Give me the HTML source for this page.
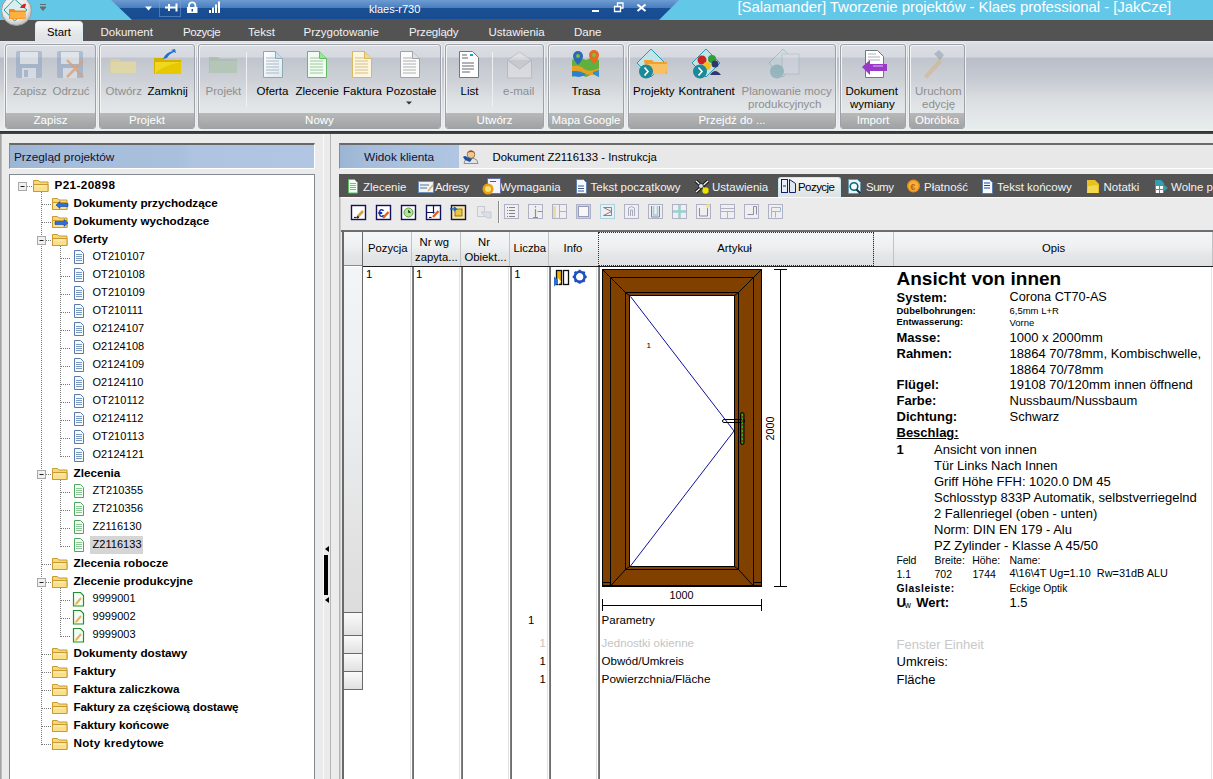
<!DOCTYPE html>
<html><head><meta charset="utf-8">
<style>
*{margin:0;padding:0;box-sizing:border-box}
html,body{width:1213px;height:779px;overflow:hidden;background:#ebebeb;font-family:"Liberation Sans",sans-serif;font-size:12px;color:#000}
.a{position:absolute}
.t{position:absolute;white-space:nowrap;line-height:1}
.tab{position:absolute;top:26.6px;color:#f2f2f2;font-size:11.5px;white-space:nowrap;line-height:1}
.grp{position:absolute;top:44px;height:85px;border:1px solid #9ea2a8;border-radius:3px;box-shadow:inset 1px 1px 0 #f2f4f6,0 0 0 1px #eef1f2;background:linear-gradient(#dadde2 0,#d6dae0 12px,#c0c4cc 13px,#cdd1d7 35px,#dde1e4 55px,#e3e8e9 68px);overflow:hidden}
.gl{position:absolute;left:0;right:0;bottom:0;height:15px;background:linear-gradient(#b9b9b9,#9fa3a5);color:#fff;font-size:11.5px;text-align:center;line-height:15px;white-space:nowrap}
.rb{position:absolute;top:86px;font-size:11.5px;white-space:nowrap;line-height:1;color:#000}
.rb.d{color:#8e8e8e}
.rsep{position:absolute;top:52px;width:1px;height:55px;background:#b0b4ba;border-right:1px solid #eef0f2}
</style></head><body>
<!-- TITLE BAR -->
<div class="a" style="left:0;top:0;width:1213px;height:20px;background:#63c7e8"></div>
<svg class="a" style="left:0;top:0" width="1213" height="20">
<defs><linearGradient id="tb" x1="0" y1="0" x2="0" y2="1">
<stop offset="0" stop-color="#6d9cd2"/><stop offset="0.38" stop-color="#4a7ebf"/><stop offset="0.40" stop-color="#1a4f96"/><stop offset="0.95" stop-color="#174c93"/><stop offset="1" stop-color="#3a6aa8"/></linearGradient></defs>
<polygon points="111,0 679,0 659,20 132,20" fill="url(#tb)"/>
<!-- quick access icons -->
<path d="M145,6.5 L152,6.5 L148.5,10.5 Z" fill="#fff"/>
<rect x="159.5" y="0.5" width="21" height="16" fill="none" stroke="#7aa6dc" stroke-dasharray="1,1"/>
<path d="M165,7.5 h11 M169,4 v7 M176.5,3.5 v8" stroke="#fff" stroke-width="2"/>
<path d="M189,7.5 v-2 a3.2,3.2 0 0 1 6.4,0 v2" stroke="#fff" stroke-width="1.8" fill="none"/>
<rect x="187" y="7" width="10.5" height="6" fill="#fff"/>
<rect x="191.5" y="9" width="1.5" height="2.5" fill="#1a4f96"/>
<path d="M209,10 h2 v3 h-2z M212,7.5 h2 v5.5 h-2z M215,4.5 h2 v8.5 h-2z M218,1.5 h2 v11.5 h-2z" fill="#fff"/>
<!-- window controls -->
<rect x="592" y="10" width="7" height="2" fill="#fff"/>
<path d="M614.5,6.5 h6 v5 h-6z M617.5,6.5 v-3.5 h5.5 v5 h-2.5" stroke="#fff" stroke-width="1.3" fill="none"/>
<path d="M637.5,4.5 L645.5,11 M645.5,4.5 L637.5,11" stroke="#fff" stroke-width="2"/>
<!-- quick access dropdown -->
<path d="M40,4.5 h6 M40,7 h6 L43,10.5 Z" stroke="#6b6b6b" stroke-width="1" fill="#6b6b6b"/>
</svg>
<div class="t" style="left:369px;top:3.5px;color:#fff;font-size:11px">klaes-r730</div>
<div class="t" style="left:737.5px;top:-0.8px;color:#fff;font-size:15px;letter-spacing:-0.06px">[Salamander] Tworzenie projektów - Klaes professional - [JakCze]</div>
<!-- TAB ROW -->
<div class="a" style="left:0;top:20px;width:1213px;height:21px;background:#535353"></div>
<div class="a" style="left:35px;top:21px;width:48px;height:21px;border:1px solid #d8ecf4;border-bottom:none;border-radius:4px 4px 0 0;background:linear-gradient(#f8f8f8,#e4e6e8 60%,#dfe2e6)"></div>
<div class="tab" style="left:47px;color:#000;font-size:11.3px">Start</div>
<div class="tab" style="left:100.5px">Dokument</div>
<div class="tab" style="left:183px;letter-spacing:-0.45px">Pozycje</div>
<div class="tab" style="left:248px">Tekst</div>
<div class="tab" style="left:303.5px">Przygotowanie</div>
<div class="tab" style="left:409px;letter-spacing:-0.2px">Przeglądy</div>
<div class="tab" style="left:488.5px">Ustawienia</div>
<div class="tab" style="left:574px">Dane</div>
<!-- app orb -->
<svg class="a" style="left:0;top:0" width="34" height="27">
<defs><radialGradient id="orb" cx="0.45" cy="0.4" r="0.6"><stop offset="0" stop-color="#ffffff"/><stop offset="0.7" stop-color="#e8e8e8"/><stop offset="1" stop-color="#bdbdbd"/></radialGradient></defs>
<circle cx="16.5" cy="10.5" r="15" fill="url(#orb)" stroke="#9a9a9a" stroke-width="1"/>
<path d="M14.5,-1 L27,10 L14.5,21 L4,10 Z" fill="#d8eef0" stroke="#2a9a9a" stroke-width="1"/>
<path d="M9,9 h5 l1.5,1.5 h10 v8.5 h-16.5z" fill="#f08a20"/>
<path d="M10,12 h15.5 v6.5 h-15.5z" fill="#fbb040"/>
<path d="M20,8 q3,-5 6,-4 l-1,4 z" fill="#d82020"/>
</svg>
<!-- RIBBON -->
<div class="a" style="left:0;top:41px;width:1213px;height:89px;background:linear-gradient(#e8eaec 0,#dadde2 2px,#d3d7dd 16px,#b9bdc8 17px,#c6cad2 38px,#dcdfe2 60px,#e4e9ea 80px,#e8ecec 88px)"></div>
<div class="a" style="left:0;top:129px;width:1213px;height:2px;background:#eef0f0"></div>
<div class="a" style="left:0;top:131px;width:1213px;height:3px;background:linear-gradient(#2e2e2e,#4a4a4a)"></div>
<div class="grp" style="left:5px;width:91px"><div class="gl">Zapisz</div></div>
<div class="grp" style="left:99px;width:96px"><div class="gl">Projekt</div></div>
<div class="grp" style="left:198px;width:243px"><div class="gl">Nowy</div></div>
<div class="grp" style="left:445px;width:99px"><div class="gl">Utwórz</div></div>
<div class="grp" style="left:548px;width:76px"><div class="gl">Mapa Google</div></div>
<div class="grp" style="left:628px;width:208px"><div class="gl">Przejdź do ...</div></div>
<div class="grp" style="left:840px;width:66px"><div class="gl">Import</div></div>
<div class="grp" style="left:909px;width:56px"><div class="gl">Obróbka</div></div>
<div class="rsep" style="left:246px"></div>
<div class="rsep" style="left:492px"></div>
<svg class="a" style="left:0;top:0" width="1000" height="112">
<defs>
<linearGradient id="dg" x1="0" y1="0" x2="1" y2="1"><stop offset="0" stop-color="#ffffff"/><stop offset="1" stop-color="#dde8ee"/></linearGradient>
</defs>
<!-- Zapisz floppy (disabled) -->
<g opacity="0.55">
<rect x="16" y="51" width="26" height="27" rx="2" fill="#8ea4c4"/>
<rect x="20" y="52" width="18" height="12" fill="#e8eef4"/>
<rect x="22" y="68" width="14" height="10" fill="#dfe6ee"/>
<rect x="24" y="70" width="4" height="7" fill="#8ea4c4"/>
</g>
<!-- Odrzuc floppy with X -->
<g opacity="0.55">
<rect x="57" y="51" width="26" height="27" rx="2" fill="#8ea4c4"/>
<rect x="61" y="52" width="18" height="12" fill="#e8eef4"/>
<rect x="63" y="68" width="14" height="10" fill="#dfe6ee"/>
</g>
<path d="M67,60 L83,77 M83,61 L67,77" stroke="#d8a27a" stroke-width="2.5" opacity="0.8"/>
<!-- Otworz folder disabled -->
<path d="M110,59 h9 l2,2 h15 v12 h-26z" fill="#d8d0a0" opacity="0.8"/>
<path d="M111,62 h25 v11 h-25z" fill="#e0d8a8" opacity="0.8"/>
<!-- Zamknij folder -->
<path d="M154,58 h9 l2,2 h16 v14 h-27z" fill="#d8b000"/>
<path d="M155,62 h26.5 l-1,12 h-25.5z" fill="#f0d820"/>
<path d="M156,72 q12,-8 25,-10 v12 h-25z" fill="#e8c800"/>
<path d="M163,59 q3,-7 10,-8 l-2,-1 4,-1 1,4 -2,-1 q-5,2 -7,6z" fill="#2070d0"/>
<!-- Projekt disabled green folder -->
<path d="M209,57 h9 l2,2 h17 v14 h-28z" fill="#a8bcae" opacity="0.8"/>
<path d="M210,61 h27 v12 h-27z" fill="#b4c8b8" opacity="0.8"/>
<!-- docs -->
<g id="doc1">
<path d="M263.5,51.5 h12 l7,7 v19 h-19z" fill="url(#dg)" stroke="#8fa8b8"/>
<path d="M275.5,51.5 v7 h7" fill="#c8dce8" stroke="#8fa8b8"/>
<path d="M266,58 h9 M266,61 h13 M266,64 h13 M266,67 h13 M266,70 h13 M266,73 h13" stroke="#a8b8c8" stroke-width="1"/>
</g>
<path d="M307.5,51.5 h12 l7,7 v19 h-19z" fill="#f2fbf2" stroke="#5cc060"/>
<path d="M319.5,51.5 v7 h7" fill="#a0e0a0" stroke="#5cc060"/>
<path d="M310,58 h9 M310,61 h13 M310,64 h13 M310,67 h13 M310,70 h13 M310,73 h13" stroke="#9cc8a0"/>
<path d="M352.5,51.5 h12 l7,7 v19 h-19z" fill="#fdf6dc" stroke="#d8b860"/>
<path d="M364.5,51.5 v7 h7" fill="#f0d890" stroke="#d8b860"/>
<path d="M355,58 h9 M355,61 h13 M355,64 h13 M355,67 h13 M355,70 h13 M355,73 h13" stroke="#d0c090"/>
<path d="M400.5,51.5 h12 l7,7 v19 h-19z" fill="#fbfbfb" stroke="#a0a4a8"/>
<path d="M412.5,51.5 v7 h7" fill="#e0e0e0" stroke="#a0a4a8"/>
<path d="M403,58 h9 M403,61 h13 M403,64 h13 M403,67 h13 M403,70 h13 M403,73 h13" stroke="#b0b0b0"/>
<path d="M406,101.5 h6 l-3,3z" fill="#333"/>
<!-- List -->
<path d="M459.5,51.5 h13 l6,6 v20 h-19z" fill="#fff" stroke="#707880"/>
<path d="M462,55 h5 M462,58 h6 M462,63 h12 M462,66 h12 M462,69 h12 M462,72 h8" stroke="#606870"/>
<path d="M470,55 h3" stroke="#20a0c0" stroke-width="2"/>
<!-- e-mail disabled -->
<g opacity="0.5">
<path d="M507.5,60 l12,-8 l12,8 v18 h-24z" fill="#e8e8ea" stroke="#a8acb0"/>
<path d="M507.5,60 l12,9 l12,-9" fill="#c8ccd0" stroke="#a8acb0"/>
</g>
<!-- Trasa map -->
<path d="M572,60 l7,-3 l7,3 l7,-3 l6,3 v17 l-6,-3 l-7,3 l-7,-3 l-7,3z" fill="#60b040"/>
<path d="M572,66 q8,-2 12,3 q6,4 15,-1 v5 q-9,4 -15,0 q-6,-4 -12,-1z" fill="#e8a020"/>
<path d="M572,71 q10,0 14,4 l-7,2 l-7,-1z" fill="#3080c8"/>
<path d="M593,72 l6,-2 v7 l-6,-3z" fill="#3090d0"/>
<path d="M578,51 a5,5 0 0 1 5,5 c0,4 -5,9 -5,9 c0,0 -5,-5 -5,-9 a5,5 0 0 1 5,-5z" fill="#2a6ab8"/>
<circle cx="578" cy="56" r="2" fill="#7ac040"/>
<path d="M594,50 a5,5 0 0 1 5,5 c0,4 -5,9 -5,9 c0,0 -5,-5 -5,-9 a5,5 0 0 1 5,-5z" fill="#e86a20"/>
<circle cx="594" cy="55" r="2" fill="#7ac040"/>
<!-- Projekty -->
<path d="M651,49 L665,63 L651,77 L637,63z" fill="#c0e4ec" stroke="#2a9aa8"/>
<path d="M644,60 h8 l2,2 h13 v12 h-21z" fill="#f0a030"/>
<path d="M645,64 h23 l-2,10 h-21z" fill="#f8c060"/>
<circle cx="646" cy="71.5" r="7" fill="#1a8a98"/>
<path d="M644.5,67.5 l3.5,4 l-3.5,4" stroke="#fff" stroke-width="1.6" fill="none"/>
<!-- Kontrahent -->
<path d="M706,49 L720,63 L706,77 L692,63z" fill="#c0e4ec" stroke="#2a9aa8"/>
<circle cx="702" cy="60" r="4.5" fill="#d02020"/>
<circle cx="712" cy="59" r="4" fill="#30a030"/>
<circle cx="707" cy="66" r="4" fill="#f0c020"/>
<circle cx="715" cy="64" r="3.5" fill="#303870"/>
<path d="M710,75 q5,-8 11,0z" fill="#303870"/>
<circle cx="700" cy="71.5" r="7" fill="#1a8a98"/>
<path d="M698.5,67.5 l3.5,4 l-3.5,4" stroke="#fff" stroke-width="1.6" fill="none"/>
<!-- Planowanie disabled -->
<g opacity="0.35">
<path d="M783,49 L797,63 L783,77 L769,63z" fill="#c0dce0" stroke="#5a9aa0"/>
<rect x="782" y="54" width="17" height="20" fill="#dde" stroke="#8aa"/>
<circle cx="777" cy="71.5" r="7" fill="#3a8a98"/>
</g>
<!-- Dokument wymiany -->
<path d="M865.5,50.5 h12 l6,6 v21 h-18z" fill="#fff" stroke="#707880"/>
<path d="M868,54 h8 M868,57 h12 M868,60 h12" stroke="#b0b0b8"/>
<path d="M862,67 l8,-7 v4 h17 v7 h-17 v4z" fill="#9a38c8"/>
<path d="M873,66 h10" stroke="#e0c0f0" stroke-width="1"/>
<!-- Uruchom edycje disabled -->
<g opacity="0.45">
<path d="M924,76 l15,-17 l3,3 l-15,17z" fill="#d8b070"/>
<path d="M934,54 l5,-4 l5,5 l-4,5z" fill="#8090a0"/>
</g>
</svg>
<div class="rb d" style="left:13px">Zapisz</div>
<div class="rb d" style="left:52.5px">Odrzuć</div>
<div class="rb d" style="left:105.5px">Otwórz</div>
<div class="rb" style="left:147.5px">Zamknij</div>
<div class="rb d" style="left:205.5px">Projekt</div>
<div class="rb" style="left:256.5px">Oferta</div>
<div class="rb" style="left:295.5px">Zlecenie</div>
<div class="rb" style="left:343px">Faktura</div>
<div class="rb" style="left:386px">Pozostałe</div>
<div class="rb" style="left:460.5px">List</div>
<div class="rb d" style="left:503px">e-mail</div>
<div class="rb" style="left:571.5px">Trasa</div>
<div class="rb" style="left:633px">Projekty</div>
<div class="rb" style="left:678.5px">Kontrahent</div>
<div class="rb d" style="left:741.5px">Planowanie mocy</div>
<div class="rb d" style="left:748px;top:99px">produkcyjnych</div>
<div class="rb" style="left:845.5px">Dokument</div>
<div class="rb" style="left:850px;top:99px">wymiany</div>
<div class="rb d" style="left:915px">Uruchom</div>
<div class="rb d" style="left:922px;top:99px">edycję</div>
<!-- LEFT PANEL -->
<div class="a" style="left:0;top:134px;width:2px;height:645px;background:linear-gradient(90deg,#9a9a9a,#c8c8c8)"></div>
<div class="a" style="left:9px;top:143px;width:306px;height:26px;border-top:2px solid #6a6866;border-left:1px solid #8a8a8a;border-right:1px solid #fff;border-bottom:1px solid #fff;background:linear-gradient(90deg,#9cb5d4,#a6bedb 20%,#a8c0dc 55%,#aec4e0 60%,#b0c6e2)"></div>
<div class="t" style="left:14px;top:152px;font-size:11.8px;color:#101030">Przegląd projektów</div>
<div class="a" style="left:9px;top:174px;width:306px;height:620px;border:1px solid #848a94;background:#fff"></div>
<div class="t" style="left:54.5px;top:178.5px;font-weight:bold;font-size:11.7px;letter-spacing:0.4px">P21-20898</div>
<div class="t" style="left:73.5px;top:196.5px;font-weight:bold;font-size:11.7px;letter-spacing:0">Dokumenty przychodzące</div>
<div class="t" style="left:73.5px;top:214.5px;font-weight:bold;font-size:11.7px;letter-spacing:0">Dokumenty wychodzące</div>
<div class="t" style="left:73.5px;top:232.5px;font-weight:bold;font-size:11.7px;letter-spacing:0">Oferty</div>
<div class="t" style="left:92.5px;top:250.5px;font-size:11px;letter-spacing:0.05px">OT210107</div>
<div class="t" style="left:92.5px;top:268.5px;font-size:11px;letter-spacing:0.05px">OT210108</div>
<div class="t" style="left:92.5px;top:286.5px;font-size:11px;letter-spacing:0.05px">OT210109</div>
<div class="t" style="left:92.5px;top:304.5px;font-size:11px;letter-spacing:0.05px">OT210111</div>
<div class="t" style="left:92.5px;top:322.5px;font-size:11px;letter-spacing:0.05px">O2124107</div>
<div class="t" style="left:92.5px;top:340.5px;font-size:11px;letter-spacing:0.05px">O2124108</div>
<div class="t" style="left:92.5px;top:358.5px;font-size:11px;letter-spacing:0.05px">O2124109</div>
<div class="t" style="left:92.5px;top:376.5px;font-size:11px;letter-spacing:0.05px">O2124110</div>
<div class="t" style="left:92.5px;top:394.5px;font-size:11px;letter-spacing:0.05px">OT210112</div>
<div class="t" style="left:92.5px;top:412.5px;font-size:11px;letter-spacing:0.05px">O2124112</div>
<div class="t" style="left:92.5px;top:430.5px;font-size:11px;letter-spacing:0.05px">OT210113</div>
<div class="t" style="left:92.5px;top:448.5px;font-size:11px;letter-spacing:0.05px">O2124121</div>
<div class="t" style="left:73.5px;top:466.5px;font-weight:bold;font-size:11.7px;letter-spacing:0">Zlecenia</div>
<div class="t" style="left:92.5px;top:484.5px;font-size:11px;letter-spacing:0.05px">ZT210355</div>
<div class="t" style="left:92.5px;top:502.5px;font-size:11px;letter-spacing:0.05px">ZT210356</div>
<div class="t" style="left:92.5px;top:520.5px;font-size:11px;letter-spacing:0.05px">Z2116130</div>
<div class="a" style="left:90px;top:536px;width:53px;height:18px;background:#d5d5d5"></div>
<div class="t" style="left:92.5px;top:538.5px;font-size:11px;letter-spacing:0.05px">Z2116133</div>
<div class="t" style="left:73.5px;top:556.5px;font-weight:bold;font-size:11.7px;letter-spacing:0">Zlecenia robocze</div>
<div class="t" style="left:73.5px;top:574.5px;font-weight:bold;font-size:11.7px;letter-spacing:0">Zlecenie produkcyjne</div>
<div class="t" style="left:92.5px;top:592.5px;font-size:11px;letter-spacing:0.05px">9999001</div>
<div class="t" style="left:92.5px;top:610.5px;font-size:11px;letter-spacing:0.05px">9999002</div>
<div class="t" style="left:92.5px;top:628.5px;font-size:11px;letter-spacing:0.05px">9999003</div>
<div class="t" style="left:73.5px;top:646.5px;font-weight:bold;font-size:11.7px;letter-spacing:0">Dokumenty dostawy</div>
<div class="t" style="left:73.5px;top:664.5px;font-weight:bold;font-size:11.7px;letter-spacing:0">Faktury</div>
<div class="t" style="left:73.5px;top:682.5px;font-weight:bold;font-size:11.7px;letter-spacing:0">Faktura zaliczkowa</div>
<div class="t" style="left:73.5px;top:700.5px;font-weight:bold;font-size:11.7px;letter-spacing:-0.14px">Faktury za częściową dostawę</div>
<div class="t" style="left:73.5px;top:718.5px;font-weight:bold;font-size:11.7px;letter-spacing:0">Faktury końcowe</div>
<div class="t" style="left:73.5px;top:736.5px;font-weight:bold;font-size:11.7px;letter-spacing:0.25px">Noty kredytowe</div>
<svg class="a" style="left:0;top:0" width="320" height="779"><path d="M41.5,192 V745" stroke="#7a7a7a" stroke-dasharray="1,1"/><path d="M60.5,246 V457" stroke="#7a7a7a" stroke-dasharray="1,1"/><path d="M60.5,480 V547" stroke="#7a7a7a" stroke-dasharray="1,1"/><path d="M60.5,588 V637" stroke="#7a7a7a" stroke-dasharray="1,1"/><rect x="18.5" y="182.5" width="8" height="8" fill="#f0f0f0" stroke="#a8a8a8"/><path d="M20.5,186.5 h4" stroke="#202020"/><path d="M27,186.5 H33" stroke="#7a7a7a" stroke-dasharray="1,1"/><path d="M33.5,180.5 h5 l1.5,1.5 h8 v9.5 h-14.5z" fill="#f6d878" stroke="#c89a30"/><path d="M33.5,184.5 h14.5 v7 h-14.5z" fill="#fbe08a" stroke="#c89a30"/><path d="M35,186 h11" stroke="#fff2c0"/><path d="M42,204.5 H52" stroke="#7a7a7a" stroke-dasharray="1,1"/><path d="M52.5,198.5 h5 l1.5,1.5 h8 v9.5 h-14.5z" fill="#f6d878" stroke="#c89a30"/><path d="M52.5,202.5 h14.5 v7 h-14.5z" fill="#fbe08a" stroke="#c89a30"/><path d="M54,204 h11" stroke="#fff2c0"/><path d="M56,205 l4,-3.5 v2 h8 v3 h-8 v2z" fill="#2a70e0" stroke="#1040a0" stroke-width="0.6"/><path d="M42,222.5 H52" stroke="#7a7a7a" stroke-dasharray="1,1"/><path d="M52.5,216.5 h5 l1.5,1.5 h8 v9.5 h-14.5z" fill="#f6d878" stroke="#c89a30"/><path d="M52.5,220.5 h14.5 v7 h-14.5z" fill="#fbe08a" stroke="#c89a30"/><path d="M54,222 h11" stroke="#fff2c0"/><path d="M68,223 l-4,-3.5 v2 h-9 v3 h9 v2z" fill="#2a70e0" stroke="#1040a0" stroke-width="0.6"/><rect x="37.5" y="236.5" width="8" height="8" fill="#f0f0f0" stroke="#a8a8a8"/><path d="M39.5,240.5 h4" stroke="#202020"/><path d="M46,240.5 H52" stroke="#7a7a7a" stroke-dasharray="1,1"/><path d="M52.5,234.5 h5 l1.5,1.5 h8 v9.5 h-14.5z" fill="#f6d878" stroke="#c89a30"/><path d="M52.5,238.5 h14.5 v7 h-14.5z" fill="#fbe08a" stroke="#c89a30"/><path d="M54,240 h11" stroke="#fff2c0"/><path d="M61,258.5 H71" stroke="#7a7a7a" stroke-dasharray="1,1"/><path d="M74.5,250.5 h6 l3,3 v10 h-9z" fill="#f4fbff" stroke="#5a78b0"/><path d="M76,254.5 h6 M76,256.5 h6 M76,258.5 h6 M76,260.5 h6" stroke="#7a98c0"/><path d="M61,276.5 H71" stroke="#7a7a7a" stroke-dasharray="1,1"/><path d="M74.5,268.5 h6 l3,3 v10 h-9z" fill="#f4fbff" stroke="#5a78b0"/><path d="M76,272.5 h6 M76,274.5 h6 M76,276.5 h6 M76,278.5 h6" stroke="#7a98c0"/><path d="M61,294.5 H71" stroke="#7a7a7a" stroke-dasharray="1,1"/><path d="M74.5,286.5 h6 l3,3 v10 h-9z" fill="#f4fbff" stroke="#5a78b0"/><path d="M76,290.5 h6 M76,292.5 h6 M76,294.5 h6 M76,296.5 h6" stroke="#7a98c0"/><path d="M61,312.5 H71" stroke="#7a7a7a" stroke-dasharray="1,1"/><path d="M74.5,304.5 h6 l3,3 v10 h-9z" fill="#f4fbff" stroke="#5a78b0"/><path d="M76,308.5 h6 M76,310.5 h6 M76,312.5 h6 M76,314.5 h6" stroke="#7a98c0"/><path d="M61,330.5 H71" stroke="#7a7a7a" stroke-dasharray="1,1"/><path d="M74.5,322.5 h6 l3,3 v10 h-9z" fill="#f4fbff" stroke="#5a78b0"/><path d="M76,326.5 h6 M76,328.5 h6 M76,330.5 h6 M76,332.5 h6" stroke="#7a98c0"/><path d="M61,348.5 H71" stroke="#7a7a7a" stroke-dasharray="1,1"/><path d="M74.5,340.5 h6 l3,3 v10 h-9z" fill="#f4fbff" stroke="#5a78b0"/><path d="M76,344.5 h6 M76,346.5 h6 M76,348.5 h6 M76,350.5 h6" stroke="#7a98c0"/><path d="M61,366.5 H71" stroke="#7a7a7a" stroke-dasharray="1,1"/><path d="M74.5,358.5 h6 l3,3 v10 h-9z" fill="#f4fbff" stroke="#5a78b0"/><path d="M76,362.5 h6 M76,364.5 h6 M76,366.5 h6 M76,368.5 h6" stroke="#7a98c0"/><path d="M61,384.5 H71" stroke="#7a7a7a" stroke-dasharray="1,1"/><path d="M74.5,376.5 h6 l3,3 v10 h-9z" fill="#f4fbff" stroke="#5a78b0"/><path d="M76,380.5 h6 M76,382.5 h6 M76,384.5 h6 M76,386.5 h6" stroke="#7a98c0"/><path d="M61,402.5 H71" stroke="#7a7a7a" stroke-dasharray="1,1"/><path d="M74.5,394.5 h6 l3,3 v10 h-9z" fill="#f4fbff" stroke="#5a78b0"/><path d="M76,398.5 h6 M76,400.5 h6 M76,402.5 h6 M76,404.5 h6" stroke="#7a98c0"/><path d="M61,420.5 H71" stroke="#7a7a7a" stroke-dasharray="1,1"/><path d="M74.5,412.5 h6 l3,3 v10 h-9z" fill="#f4fbff" stroke="#5a78b0"/><path d="M76,416.5 h6 M76,418.5 h6 M76,420.5 h6 M76,422.5 h6" stroke="#7a98c0"/><path d="M61,438.5 H71" stroke="#7a7a7a" stroke-dasharray="1,1"/><path d="M74.5,430.5 h6 l3,3 v10 h-9z" fill="#f4fbff" stroke="#5a78b0"/><path d="M76,434.5 h6 M76,436.5 h6 M76,438.5 h6 M76,440.5 h6" stroke="#7a98c0"/><path d="M61,456.5 H71" stroke="#7a7a7a" stroke-dasharray="1,1"/><path d="M74.5,448.5 h6 l3,3 v10 h-9z" fill="#f4fbff" stroke="#5a78b0"/><path d="M76,452.5 h6 M76,454.5 h6 M76,456.5 h6 M76,458.5 h6" stroke="#7a98c0"/><rect x="37.5" y="470.5" width="8" height="8" fill="#f0f0f0" stroke="#a8a8a8"/><path d="M39.5,474.5 h4" stroke="#202020"/><path d="M46,474.5 H52" stroke="#7a7a7a" stroke-dasharray="1,1"/><path d="M52.5,468.5 h5 l1.5,1.5 h8 v9.5 h-14.5z" fill="#f6d878" stroke="#c89a30"/><path d="M52.5,472.5 h14.5 v7 h-14.5z" fill="#fbe08a" stroke="#c89a30"/><path d="M54,474 h11" stroke="#fff2c0"/><path d="M61,492.5 H71" stroke="#7a7a7a" stroke-dasharray="1,1"/><path d="M74.5,484.5 h6 l3,3 v10 h-9z" fill="#f6fff6" stroke="#4aaa5a"/><path d="M76,488.5 h6 M76,490.5 h6 M76,492.5 h6 M76,494.5 h6" stroke="#8ac898"/><path d="M61,510.5 H71" stroke="#7a7a7a" stroke-dasharray="1,1"/><path d="M74.5,502.5 h6 l3,3 v10 h-9z" fill="#f6fff6" stroke="#4aaa5a"/><path d="M76,506.5 h6 M76,508.5 h6 M76,510.5 h6 M76,512.5 h6" stroke="#8ac898"/><path d="M61,528.5 H71" stroke="#7a7a7a" stroke-dasharray="1,1"/><path d="M74.5,520.5 h6 l3,3 v10 h-9z" fill="#f6fff6" stroke="#4aaa5a"/><path d="M76,524.5 h6 M76,526.5 h6 M76,528.5 h6 M76,530.5 h6" stroke="#8ac898"/><path d="M61,546.5 H71" stroke="#7a7a7a" stroke-dasharray="1,1"/><path d="M74.5,538.5 h6 l3,3 v10 h-9z" fill="#f6fff6" stroke="#4aaa5a"/><path d="M76,542.5 h6 M76,544.5 h6 M76,546.5 h6 M76,548.5 h6" stroke="#8ac898"/><path d="M42,564.5 H52" stroke="#7a7a7a" stroke-dasharray="1,1"/><path d="M52.5,558.5 h5 l1.5,1.5 h8 v9.5 h-14.5z" fill="#f6d878" stroke="#c89a30"/><path d="M52.5,562.5 h14.5 v7 h-14.5z" fill="#fbe08a" stroke="#c89a30"/><path d="M54,564 h11" stroke="#fff2c0"/><rect x="37.5" y="578.5" width="8" height="8" fill="#f0f0f0" stroke="#a8a8a8"/><path d="M39.5,582.5 h4" stroke="#202020"/><path d="M46,582.5 H52" stroke="#7a7a7a" stroke-dasharray="1,1"/><path d="M52.5,576.5 h5 l1.5,1.5 h8 v9.5 h-14.5z" fill="#f6d878" stroke="#c89a30"/><path d="M52.5,580.5 h14.5 v7 h-14.5z" fill="#fbe08a" stroke="#c89a30"/><path d="M54,582 h11" stroke="#fff2c0"/><path d="M61,600.5 H71" stroke="#7a7a7a" stroke-dasharray="1,1"/><path d="M73.5,592.5 h7 l3,3 v10.5 h-10z" fill="#f4fff4" stroke="#209030" stroke-width="1.2"/><path d="M76,604 l5,-6" stroke="#e8b060" stroke-width="2"/><circle cx="75.5" cy="604" r="1" fill="#f0e020"/><path d="M61,618.5 H71" stroke="#7a7a7a" stroke-dasharray="1,1"/><path d="M73.5,610.5 h7 l3,3 v10.5 h-10z" fill="#f4fff4" stroke="#209030" stroke-width="1.2"/><path d="M76,622 l5,-6" stroke="#e8b060" stroke-width="2"/><circle cx="75.5" cy="622" r="1" fill="#f0e020"/><path d="M61,636.5 H71" stroke="#7a7a7a" stroke-dasharray="1,1"/><path d="M73.5,628.5 h7 l3,3 v10.5 h-10z" fill="#f4fff4" stroke="#209030" stroke-width="1.2"/><path d="M76,640 l5,-6" stroke="#e8b060" stroke-width="2"/><circle cx="75.5" cy="640" r="1" fill="#f0e020"/><path d="M42,654.5 H52" stroke="#7a7a7a" stroke-dasharray="1,1"/><path d="M52.5,648.5 h5 l1.5,1.5 h8 v9.5 h-14.5z" fill="#f6d878" stroke="#c89a30"/><path d="M52.5,652.5 h14.5 v7 h-14.5z" fill="#fbe08a" stroke="#c89a30"/><path d="M54,654 h11" stroke="#fff2c0"/><path d="M42,672.5 H52" stroke="#7a7a7a" stroke-dasharray="1,1"/><path d="M52.5,666.5 h5 l1.5,1.5 h8 v9.5 h-14.5z" fill="#f6d878" stroke="#c89a30"/><path d="M52.5,670.5 h14.5 v7 h-14.5z" fill="#fbe08a" stroke="#c89a30"/><path d="M54,672 h11" stroke="#fff2c0"/><path d="M42,690.5 H52" stroke="#7a7a7a" stroke-dasharray="1,1"/><path d="M52.5,684.5 h5 l1.5,1.5 h8 v9.5 h-14.5z" fill="#f6d878" stroke="#c89a30"/><path d="M52.5,688.5 h14.5 v7 h-14.5z" fill="#fbe08a" stroke="#c89a30"/><path d="M54,690 h11" stroke="#fff2c0"/><path d="M42,708.5 H52" stroke="#7a7a7a" stroke-dasharray="1,1"/><path d="M52.5,702.5 h5 l1.5,1.5 h8 v9.5 h-14.5z" fill="#f6d878" stroke="#c89a30"/><path d="M52.5,706.5 h14.5 v7 h-14.5z" fill="#fbe08a" stroke="#c89a30"/><path d="M54,708 h11" stroke="#fff2c0"/><path d="M42,726.5 H52" stroke="#7a7a7a" stroke-dasharray="1,1"/><path d="M52.5,720.5 h5 l1.5,1.5 h8 v9.5 h-14.5z" fill="#f6d878" stroke="#c89a30"/><path d="M52.5,724.5 h14.5 v7 h-14.5z" fill="#fbe08a" stroke="#c89a30"/><path d="M54,726 h11" stroke="#fff2c0"/><path d="M42,744.5 H52" stroke="#7a7a7a" stroke-dasharray="1,1"/><path d="M52.5,738.5 h5 l1.5,1.5 h8 v9.5 h-14.5z" fill="#f6d878" stroke="#c89a30"/><path d="M52.5,742.5 h14.5 v7 h-14.5z" fill="#fbe08a" stroke="#c89a30"/><path d="M54,744 h11" stroke="#fff2c0"/></svg>
<div class="a" style="left:323px;top:134px;width:1px;height:645px;background:#fbfbfb"></div>
<div class="a" style="left:330px;top:134px;width:1px;height:645px;background:#b4b4b4"></div>
<div class="a" style="left:324px;top:555px;width:4px;height:40px;background:#000"></div>
<svg class="a" style="left:320px;top:540px" width="12" height="70"><path d="M329,546 l-4,3 l4,3z M329,597 l-4,3 l4,3z" transform="translate(-320,-540)" fill="#000"/></svg><!-- RIGHT PANEL HEADER -->
<div class="a" style="left:339px;top:143px;width:874px;height:26px;border-top:2px solid #6a6a6a;border-left:1px solid #8a8a8a;border-bottom:1px solid #fff;background:#e8e8e8"></div>
<div class="a" style="left:340px;top:145px;width:119px;height:23px;background:linear-gradient(90deg,#9cb5d4,#a6bedb 25%,#aac2de 60%,#b0c6e2)"></div>
<div class="t" style="left:364px;top:152px;font-size:11.8px;color:#101030">Widok klienta</div>
<svg class="a" style="left:460px;top:148px" width="22" height="18">
<path d="M4,15.5 q0,-4 4,-5 h6 q4,1 4,5z" fill="#e4e4e4" stroke="#909090"/>
<circle cx="11" cy="6.5" r="3.8" fill="#f0c890" stroke="#8a6030" stroke-width="0.8"/>
<path d="M7,5 q4,-5 8,0 q-4,-2 -8,0z" fill="#8a5a20"/>
<path d="M3,9 q2,-2 4,0 l5,2 l-2,3 l-5,-2z" fill="#1a50a0"/>
</svg>
<div class="t" style="left:492.5px;top:152px;font-size:11.4px;color:#000">Dokument Z2116133 - Instrukcja</div>
<!-- TAB BAR -->
<div class="a" style="left:339px;top:174px;width:874px;height:23px;background:#535353"></div>
<div class="a" style="left:778px;top:177px;width:63px;height:20px;border:1px solid #c8e8f4;border-bottom:none;border-radius:3px 3px 0 0;background:linear-gradient(#f6f6f6,#e6e8ea 60%,#dde1e5)"></div>
<style>.tb{position:absolute;top:182px;font-size:11.5px;color:#f2f2f2;white-space:nowrap;line-height:1}</style>
<div class="tb" style="left:363px">Zlecenie</div>
<div class="tb" style="left:435px;letter-spacing:-0.3px">Adresy</div>
<div class="tb" style="left:500px">Wymagania</div>
<div class="tb" style="left:590.5px">Tekst początkowy</div>
<div class="tb" style="left:712px">Ustawienia</div>
<div class="tb" style="left:798px;color:#000;letter-spacing:-0.55px">Pozycje</div>
<div class="tb" style="left:866px;letter-spacing:-0.5px">Sumy</div>
<div class="tb" style="left:924px">Płatność</div>
<div class="tb" style="left:997px">Tekst końcowy</div>
<div class="tb" style="left:1103.5px">Notatki</div>
<div class="tb" style="left:1171px">Wolne p</div>
<svg class="a" style="left:0;top:0" width="1213" height="232">
<!-- tab icons -->
<path d="M348.5,179.5 h6 l3,3 v10.5 h-9z" fill="#f0fff0" stroke="#5ac060"/>
<path d="M350,183.5 h6 M350,185.5 h6 M350,187.5 h6 M350,189.5 h6" stroke="#80b890"/>
<rect x="418.5" y="181.5" width="15" height="11" fill="#eef4fa" stroke="#6a90c0"/>
<path d="M420,185 h9 M420,188 h7" stroke="#5a7090"/>
<path d="M428,191 l5,-6" stroke="#e0b060" stroke-width="1.5"/>
<rect x="487.5" y="178.5" width="13" height="15" fill="#f4f4ff" stroke="#6a70b0"/>
<path d="M490,181.5 h6" stroke="#4060a0"/>
<circle cx="488" cy="189" r="5.5" fill="#e8a010"/>
<circle cx="488" cy="189" r="3" fill="#f8e070"/>
<path d="M576.5,179.5 h7 l3,3 v11 h-10z" fill="#f4faff" stroke="#5a80b0"/>
<path d="M578,186 h6 M578,188.5 h6 M578,191 h6" stroke="#405890" stroke-width="1.2"/>
<path d="M696,181 l12,11 M708,181 l-12,11" stroke="#101010" stroke-width="3.2"/>
<path d="M696,181 l12,11 M708,181 l-12,11" stroke="#f0f0f0" stroke-width="1.4"/>
<circle cx="701" cy="186" r="2.5" fill="#d8e0e8" stroke="#101010" stroke-width="0.8"/>
<circle cx="705.5" cy="190.5" r="3.2" fill="#f0e000"/>
<rect x="781.5" y="179.5" width="6" height="13" fill="#e8eef8" stroke="#102070"/>
<path d="M789.5,179.5 l6,4 v9 h-6z" fill="#e0e8f0" stroke="#102070"/>
<path d="M783,186 h3" stroke="#102070"/>
<path d="M848.5,179.5 h9 l3,3 v11 h-12z" fill="#e8f4f8" stroke="#6a98b0"/>
<circle cx="854" cy="186.5" r="3.8" fill="#f4fbfb" stroke="#106870" stroke-width="1.6"/>
<path d="M856.5,189.5 l4,4" stroke="#103840" stroke-width="2.2"/>
<circle cx="913.5" cy="186" r="6.5" fill="#e89018"/>
<circle cx="913.5" cy="186" r="5" fill="#f4b040"/>
<text x="910.5" y="190" font-family="Liberation Sans" font-size="8.5" font-weight="bold" fill="#c06000">€</text>
<path d="M982.5,179.5 h7 l3,3 v11 h-10z" fill="#f4faff" stroke="#5a80b0"/>
<path d="M984,183 h6 M984,185.5 h6 M984,188 h6" stroke="#2040a0" stroke-width="1.2"/>
<path d="M1087,180 h8 l4,4 v9 h-12z" fill="#e8c020"/>
<path d="M1088,186 l10,-1 v8 h-11z" fill="#f4d850"/>
<path d="M1155,180 h6 l3,3 v2 l4,3 l-4,3 v2 h-9z" fill="#30a0b0"/>
<rect x="1156" y="186" width="3" height="3" fill="#fff"/><rect x="1160" y="186" width="3" height="3" fill="#fff"/>
<rect x="1156" y="190" width="3" height="3" fill="#fff"/><rect x="1160" y="190" width="3" height="3" fill="#fff"/>
</svg>
<!-- content frame below tabs -->
<div class="a" style="left:339px;top:197px;width:2px;height:582px;background:linear-gradient(90deg,#a8a8a8,#d8d8d8)"></div>
<div class="a" style="left:341px;top:197px;width:872px;height:1px;background:#fafafa"></div>
<!-- TOOLBAR -->
<svg class="a" style="left:0;top:0" width="1213" height="232">
<g>
<rect x="351.5" y="205.5" width="14" height="14" fill="#fff" stroke="#101060" stroke-width="1.4"/>
<path d="M354,217.5 h2.5" stroke="#202020" stroke-width="1.2"/>
<path d="M357.5,217 l5.5,-6" stroke="#d8a040" stroke-width="2.6"/>
<path d="M357,218 l1.5,-1.5" stroke="#202020" stroke-width="2"/>
</g>
<g>
<rect x="376.5" y="205.5" width="14" height="14" fill="#fff" stroke="#101060" stroke-width="1.4"/>
<text x="378" y="217" font-family="Liberation Sans" font-size="11" font-weight="bold" fill="#1030a0">€</text>
<path d="M383,218 l5.5,-6" stroke="#e86010" stroke-width="2.4"/>
</g>
<g>
<rect x="401.5" y="205.5" width="14" height="14" fill="#fff" stroke="#101060" stroke-width="1.4"/>
<circle cx="408.5" cy="212.5" r="4.5" fill="#b8e0a0" stroke="#60a040"/>
<path d="M408.5,210 v2.5 h2" stroke="#306020"/>
</g>
<g>
<rect x="426.5" y="205.5" width="14" height="14" fill="#fff" stroke="#101060" stroke-width="1.4"/>
<path d="M426.5,212.5 h8 M433.5,205.5 v8" stroke="#101060" stroke-width="1.2"/>
<path d="M429,217.5 h2.5" stroke="#202020" stroke-width="1.2"/>
<path d="M433,217 l5.5,-6" stroke="#e86010" stroke-width="2.4"/>
</g>
<g>
<rect x="451.5" y="205.5" width="14" height="14" fill="#f8e8a0" stroke="#101060" stroke-width="1.4"/>
<rect x="455" y="209" width="7" height="7" fill="#e8c840" stroke="#806010" stroke-width="0.8"/>
<path d="M450,209 h6 l-2,-2 M456,209 l-2,2" stroke="#2060c0" stroke-width="1.6" fill="none"/>
</g>
<g opacity="0.35">
<rect x="477.5" y="206.5" width="7" height="10" fill="#e8e8f0" stroke="#8090b0"/>
<path d="M481,212 l6,6 h4 v-6z" fill="#c0c8d8" stroke="#8090b0"/>
</g>
<path d="M498.5,201 v22" stroke="#8a8a8a"/><path d="M499.5,201 v22" stroke="#fafafa"/>
<g opacity="0.6">
<rect x="504.5" y="204.5" width="14" height="14" fill="#f2f2f4" stroke="#8a8ab0"/><path d="M507,207.5 h1 M509,207.5 h6 M507,210.5 h1 M509,210.5 h6 M507,213.5 h1 M509,213.5 h6 M507,216.5 h1 M509,216.5 h6" stroke="#404050"/>
<rect x="528.5" y="204.5" width="14" height="14" fill="#f2f2f4" stroke="#8a8ab0"/><path d="M535.5,206 v1.5 M535.5,209 v8 M533,217.5 h5 M537.5,211.5 h5" stroke="#505070" stroke-width="1.2"/>
<rect x="552.5" y="204.5" width="14" height="14" fill="#f2f2f4" stroke="#8a8ab0"/><rect x="553" y="206" width="3" height="12" fill="#e8d080"/><path d="M559.5,205 v13 M559.5,211.5 h7" stroke="#8a8ab0"/>
<rect x="576.5" y="204.5" width="14" height="14" fill="#f2f2f4" stroke="#8a8ab0"/><rect x="578.5" y="206.5" width="10" height="10" fill="#fff" stroke="#5a6aa0"/><rect x="577.5" y="205.5" width="12" height="12" fill="none" stroke="#a0c8e8"/>
<rect x="600.5" y="204.5" width="14" height="14" fill="#f2f2f4" stroke="#80c0d8"/><path d="M603.5,207.5 L611.5,211.5 L603.5,215.5 M603.5,207.5 h8 v8 h-8" stroke="#404050" fill="none"/>
<rect x="624.5" y="204.5" width="14" height="14" fill="#f2f2f4" stroke="#8a8ab0"/><path d="M628.5,216 v-8 q3,-3 6,0 v8 M630.5,216 v-6 h2 v6" stroke="#8080a0" fill="none"/>
<rect x="648.5" y="204.5" width="14" height="14" fill="#f2f2f4" stroke="#8a8ab0"/><path d="M651.5,206 v11 h8 v-11" stroke="#404060" fill="none"/><path d="M653.5,206 v9 h4 v-9" stroke="#60c0d0" fill="none" stroke-width="1.5"/>
<rect x="672.5" y="204.5" width="14" height="14" fill="#f2f2f4" stroke="#8a8ab0"/><path d="M679.5,205 v13 M673,211.5 h13" stroke="#60c0c0" stroke-width="2.5"/>
<rect x="696.5" y="204.5" width="14" height="14" fill="#f2f2f4" stroke="#8a8ab0"/><path d="M699.5,208 v8 h8 v-8" stroke="#505070" fill="none"/><circle cx="708" cy="206" r="2" fill="#f0e060"/>
<rect x="720.5" y="204.5" width="14" height="14" fill="#f2f2f4" stroke="#8a8ab0"/><path d="M721,208.5 h13 M721,211.5 h13 M727.5,211.5 v7" stroke="#8a8ab0"/>
<rect x="744.5" y="204.5" width="14" height="14" fill="#f2f2f4" stroke="#8a8ab0"/><path d="M747.5,214.5 h6 v-8 h3 v8" stroke="#505070" fill="none"/>
<rect x="768.5" y="204.5" width="14" height="14" fill="#f2f2f4" stroke="#8a8ab0"/><path d="M771.5,207.5 h9 v4 h-9z M771.5,211.5 v6 M775.5,211.5 v6" stroke="#60a0b0" fill="none"/>
</g>
</svg>
<!-- GRID -->
<div class="a" style="left:341px;top:230px;width:872px;height:2px;background:#6e6e6e"></div>
<div class="a" style="left:342px;top:230px;width:2px;height:549px;background:#6a6a6a"></div>
<div class="a" style="left:344px;top:232px;width:869px;height:547px;background:#fff"></div>
<div class="a" style="left:344px;top:232px;width:869px;height:34px;background:linear-gradient(#f5f6f7,#eeeff0 45%,#e4e5e6 70%,#e0e1e2)"></div>
<div class="a" style="left:363px;top:266px;width:850px;height:1px;background:#1e1e1e"></div>
<div class="a" style="left:344px;top:265px;width:18px;height:1px;background:#8a8a8a"></div>
<div class="a" style="left:362px;top:232px;width:1px;height:457px;background:#6a6a6a"></div>
<div class="a" style="left:411px;top:232px;width:1px;height:34px;background:#c2c2c2"></div>
<div class="a" style="left:460px;top:232px;width:1px;height:34px;background:#c2c2c2"></div>
<div class="a" style="left:509px;top:232px;width:1px;height:34px;background:#c2c2c2"></div>
<div class="a" style="left:548px;top:232px;width:1px;height:34px;background:#c2c2c2"></div>
<div class="a" style="left:873px;top:232px;width:1px;height:34px;background:#c2c2c2"></div>
<div class="a" style="left:893px;top:232px;width:1px;height:34px;background:#c2c2c2"></div>
<div class="a" style="left:1212px;top:232px;width:1px;height:34px;background:#c2c2c2"></div>
<div class="a" style="left:598px;top:232px;width:276px;height:34px;border:1px dotted #303030"></div>
<div class="t" style="left:368px;top:243.23px;font-size:11.3px;">Pozycja</div>
<div class="t" style="left:419.5px;top:237.03px;font-size:11.3px;">Nr wg</div>
<div class="t" style="left:415px;top:252.33px;font-size:11.3px;">zapyta...</div>
<div class="t" style="left:478px;top:237.03px;font-size:11.3px;">Nr</div>
<div class="t" style="left:464.5px;top:252.33px;font-size:11.3px;">Obiekt...</div>
<div class="t" style="left:513.5px;top:243.23px;font-size:11.3px;">Liczba</div>
<div class="t" style="left:563.5px;top:243.23px;font-size:11.3px;">Info</div>
<div class="t" style="left:717.3px;top:243.23px;font-size:11.3px;">Artykuł</div>
<div class="t" style="left:1042px;top:243.23px;font-size:11.3px;">Opis</div>
<div class="a" style="left:344px;top:267px;width:18px;height:345px;background:linear-gradient(#f2f4f6,#eceef0 40%,#e2e2e2 80%,#dcdcdc)"></div>
<div class="a" style="left:344px;top:612px;width:18px;height:23px;border-top:1px solid #6a6a6a;background:linear-gradient(#fafafa,#eeeeee 50%,#e0e0e0)"></div>
<div class="a" style="left:344px;top:635px;width:18px;height:18px;border-top:1px solid #6a6a6a;background:linear-gradient(#fafafa,#eeeeee 50%,#e0e0e0)"></div>
<div class="a" style="left:344px;top:653px;width:18px;height:18px;border-top:1px solid #6a6a6a;background:linear-gradient(#fafafa,#eeeeee 50%,#e0e0e0)"></div>
<div class="a" style="left:344px;top:671px;width:18px;height:18px;border-top:1px solid #6a6a6a;background:linear-gradient(#fafafa,#eeeeee 50%,#e0e0e0)"></div>
<div class="a" style="left:344px;top:689px;width:19px;height:1px;background:#6a6a6a"></div>
<div class="a" style="left:410px;top:267px;width:1px;height:512px;background:#e2e2e2"></div>
<div class="a" style="left:412px;top:267px;width:2px;height:512px;background:linear-gradient(90deg,#8a8a8a,#646464)"></div>
<div class="a" style="left:459px;top:267px;width:1px;height:512px;background:#e2e2e2"></div>
<div class="a" style="left:461px;top:267px;width:2px;height:512px;background:linear-gradient(90deg,#8a8a8a,#646464)"></div>
<div class="a" style="left:508px;top:267px;width:1px;height:512px;background:#e2e2e2"></div>
<div class="a" style="left:510px;top:267px;width:2px;height:512px;background:linear-gradient(90deg,#8a8a8a,#646464)"></div>
<div class="a" style="left:547px;top:267px;width:1px;height:512px;background:#e2e2e2"></div>
<div class="a" style="left:549px;top:267px;width:2px;height:512px;background:linear-gradient(90deg,#8a8a8a,#646464)"></div>
<div class="a" style="left:596px;top:267px;width:1px;height:512px;background:#e2e2e2"></div>
<div class="a" style="left:598px;top:267px;width:2px;height:512px;background:linear-gradient(90deg,#8a8a8a,#646464)"></div>
<div class="a" style="left:1211px;top:267px;width:1px;height:512px;background:#e6e6e6"></div>
<div class="t" style="left:366px;top:269.23px;font-size:11.3px;">1</div>
<div class="t" style="left:416px;top:269.23px;font-size:11.3px;">1</div>
<div class="t" style="left:514.3px;top:269.23px;font-size:11.3px;">1</div>
<div class="t" style="left:528px;top:615.23px;font-size:11.3px;">1</div>
<div class="t" style="left:601.6px;top:615.02px;font-size:11.55px;">Parametry</div>
<div class="t" style="left:539.6px;top:638.13px;font-size:11.3px;color:#c4c4c4">1</div>
<div class="t" style="left:601.6px;top:637.92px;font-size:11.55px;color:#c4c4c4">Jednostki okienne</div>
<div class="t" style="left:539.6px;top:655.93px;font-size:11.3px;">1</div>
<div class="t" style="left:601.6px;top:655.72px;font-size:11.55px;">Obwód/Umkreis</div>
<div class="t" style="left:539.6px;top:674.43px;font-size:11.3px;">1</div>
<div class="t" style="left:601.6px;top:674.01px;font-size:11.8px;">Powierzchnia/Fläche</div>
<div class="t" style="left:896.5px;top:268.62px;font-size:19px;font-weight:bold;">Ansicht von innen</div>
<div class="t" style="left:896.5px;top:290.60px;font-size:13px;font-weight:bold;">System:</div>
<div class="t" style="left:1009.5px;top:290.85px;font-size:12.7px;">Corona CT70-AS</div>
<div class="t" style="left:896.5px;top:306.06px;font-size:9.5px;font-weight:bold;">Dübelbohrungen:</div>
<div class="t" style="left:1009.5px;top:306.06px;font-size:9.5px;">6,5mm L+R</div>
<div class="t" style="left:896.5px;top:318.13px;font-size:9.3px;font-weight:bold;">Entwasserung:</div>
<div class="t" style="left:1009.5px;top:317.96px;font-size:9.5px;">Vorne</div>
<div class="t" style="left:896.5px;top:330.70px;font-size:13px;font-weight:bold;">Masse:</div>
<div class="t" style="left:1009.5px;top:330.70px;font-size:13px;">1000 x 2000mm</div>
<div class="t" style="left:896.5px;top:346.50px;font-size:13px;font-weight:bold;">Rahmen:</div>
<div class="t" style="left:1009.5px;top:346.50px;font-size:13px;">18864 70/78mm, Kombischwelle,</div>
<div class="t" style="left:1009.5px;top:362.90px;font-size:13px;">18864 70/78mm</div>
<div class="t" style="left:896.5px;top:378.30px;font-size:13px;font-weight:bold;">Flügel:</div>
<div class="t" style="left:1009.5px;top:378.30px;font-size:13px;">19108 70/120mm innen öffnend</div>
<div class="t" style="left:896.5px;top:394.10px;font-size:13px;font-weight:bold;">Farbe:</div>
<div class="t" style="left:1009.5px;top:394.10px;font-size:13px;">Nussbaum/Nussbaum</div>
<div class="t" style="left:896.5px;top:410.00px;font-size:13px;font-weight:bold;">Dichtung:</div>
<div class="t" style="left:1009.5px;top:410.00px;font-size:13px;">Schwarz</div>
<div class="t" style="left:896.5px;top:425.80px;font-size:13px;font-weight:bold;text-decoration:underline">Beschlag:</div>
<div class="t" style="left:896.5px;top:442.50px;font-size:13px;font-weight:bold;">1</div>
<div class="t" style="left:934px;top:442.50px;font-size:13px;">Ansicht von innen</div>
<div class="t" style="left:934px;top:458.50px;font-size:13px;">Tür Links Nach Innen</div>
<div class="t" style="left:934px;top:474.50px;font-size:13px;">Griff Höhe FFH: 1020.0 DM 45</div>
<div class="t" style="left:934px;top:490.50px;font-size:13px;">Schlosstyp 833P Automatik, selbstverriegelnd</div>
<div class="t" style="left:934px;top:506.50px;font-size:13px;">2 Fallenriegel (oben - unten)</div>
<div class="t" style="left:934px;top:522.50px;font-size:13px;">Norm: DIN EN 179 - Alu</div>
<div class="t" style="left:934px;top:538.50px;font-size:13px;">PZ Zylinder - Klasse A 45/50</div>
<div class="t" style="left:896.5px;top:554.91px;font-size:10.5px;letter-spacing:-0.2px">Feld</div>
<div class="t" style="left:934.5px;top:554.91px;font-size:10.5px;">Breite:</div>
<div class="t" style="left:972.2px;top:554.91px;font-size:10.5px;">Höhe:</div>
<div class="t" style="left:1009.5px;top:554.91px;font-size:10.5px;">Name:</div>
<div class="t" style="left:896.5px;top:568.81px;font-size:10.5px;">1.1</div>
<div class="t" style="left:934.5px;top:568.81px;font-size:10.5px;">702</div>
<div class="t" style="left:972.5px;top:568.81px;font-size:10.5px;">1744</div>
<div class="t" style="left:1009.5px;top:568.47px;font-size:10.9px;">4\16\4T Ug=1.10&nbsp; Rw=31dB ALU</div>
<div class="t" style="left:896.5px;top:583.58px;font-size:10.3px;font-weight:bold;letter-spacing:0.55px">Glasleiste:</div>
<div class="t" style="left:1009.5px;top:583.58px;font-size:10.3px;">Eckige Optik</div>
<div class="t" style="left:896.5px;top:596.40px;font-size:13px;font-weight:bold;">U</div>
<div class="t" style="left:904.8px;top:601.40px;font-size:8.5px;">w</div>
<div class="t" style="left:916.2px;top:596.40px;font-size:13px;font-weight:bold;">Wert:</div>
<div class="t" style="left:1009.5px;top:596.40px;font-size:13px;">1.5</div>
<div class="t" style="left:896.5px;top:637.50px;font-size:13px;color:#c8c8c8">Fenster Einheit</div>
<div class="t" style="left:896.5px;top:655.20px;font-size:13px;">Umkreis:</div>
<div class="t" style="left:896.5px;top:672.60px;font-size:13px;">Fläche</div><svg class="a" style="left:590px;top:260px" width="210" height="360" viewBox="590 260 210 360" shape-rendering="crispEdges">
<!-- brown fill -->
<path d="M602,269 H762 V587 H602Z M630,296 V566 H734 V296Z" fill="#804000" fill-rule="evenodd"/>
<g stroke="#000" stroke-width="1" fill="none">
<path d="M602.5,269.5 H761.5 V586.5 H602.5Z"/>
<path d="M602.5,585.5 H761.5"/>
<path d="M610.5,277.5 H753.5 V586.5 M610.5,277.5 V586.5"/>
<path d="M602.5,582.5 H610.5 M753.5,582.5 H761.5"/>
<path d="M625.5,292.5 H738.5 V569.5 H625.5Z"/>
<path d="M629.5,295.5 H734.5 V566.5 H629.5Z"/>
</g>
<g stroke="#000" stroke-width="1" fill="none" shape-rendering="auto">
<path d="M602.5,269.5 L610.5,277.5 L625.5,292.5 L629.5,295.5"/>
<path d="M761.5,269.5 L753.5,277.5 L738.5,292.5 L734.5,295.5"/>
<path d="M610.5,586 L625.5,569.5 L629.5,566.5"/>
<path d="M753.5,586 L738.5,569.5 L734.5,566.5"/>
</g>
<g stroke="#1010a0" stroke-width="1" fill="none" shape-rendering="auto">
<path d="M630.5,296.5 L734,431 L630.5,566"/>
</g>
<text x="646.5" y="348" font-family="Liberation Sans" font-size="8" fill="#000">1</text>
<!-- handle -->
<g shape-rendering="auto">
<rect x="722.5" y="419.5" width="22" height="3" rx="1.5" fill="none" stroke="#000" stroke-width="1"/>
<rect x="740.5" y="412.5" width="3.5" height="32" rx="1.7" fill="none" stroke="#000" stroke-width="1"/>
<path d="M742.3,414 V443" stroke="#20d020" stroke-width="1" stroke-dasharray="2,2"/>
</g>
<!-- dimensions -->
<g stroke="#000" stroke-width="1" fill="none">
<path d="M780.5,269.5 V586.5 M774,269.5 H787 M774,586.5 H787"/>
<path d="M602.5,605.5 H761.5 M602.5,599 V611 M761.5,599 V611"/>
</g>
<text x="681.5" y="599" text-anchor="middle" font-family="Liberation Sans" font-size="10.8" fill="#000">1000</text>
<text x="0" y="0" transform="translate(774,428.5) rotate(-90)" text-anchor="middle" font-family="Liberation Sans" font-size="10.8" fill="#000">2000</text>
</svg>
<!-- info icons -->
<svg class="a" style="left:550px;top:266px" width="45" height="22">
<rect x="6.5" y="4.5" width="5" height="14" fill="#f0b000" stroke="#101010" stroke-width="1.3"/>
<rect x="13.5" y="4.5" width="5" height="14" fill="#fff" stroke="#101010" stroke-width="1.3"/>
<path d="M4,10.5 l6,5 l-6,5 z" fill="#2a70d0"/>
<path d="M8,12 l3,3.5 l-3,3.5z" fill="#fff"/>
<g transform="translate(29.7,10.8)">
<circle r="5" fill="none" stroke="#2050c0" stroke-width="2.6"/>
<path d="M0,-7 V-4 M0,4 V7 M-7,0 H-4 M4,0 H7 M-5,-5 L-3,-3 M3,3 L5,5 M-5,5 L-3,3 M3,-3 L5,-5" stroke="#2050c0" stroke-width="2.2"/>
</g>
</svg>
</body></html>
